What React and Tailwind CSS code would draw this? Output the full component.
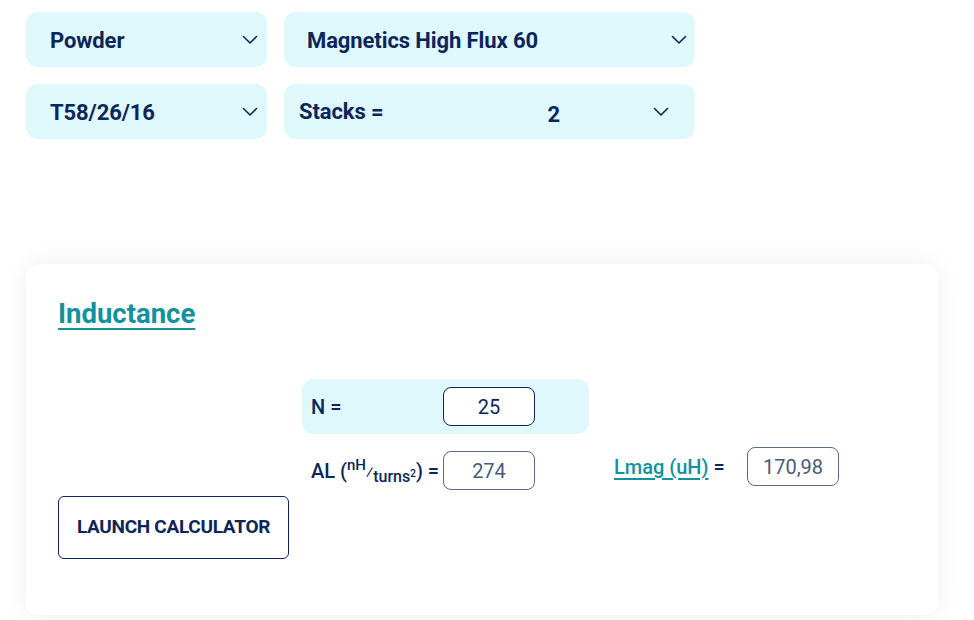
const Chevron = () => (
  <svg width="16" height="10" viewBox="0 0 16 10" fill="none" className="shrink-0">
    <polyline points="1.5,1.5 8,8 14.5,1.5" stroke="#0c2659" strokeWidth="1.6" strokeLinecap="round" strokeLinejoin="round" />
  </svg>
);

const Select = ({ className, children }) => (
  <div className={`h-[55px] rounded-xl bg-[#dff8fc] flex items-center ${className}`}>
    {children}
  </div>
);

const ValueBox = ({ value, strong }) => (
  <div
    className={`w-[92px] h-[39px] rounded-lg border bg-white flex items-center justify-center text-[20px] ${
      strong ? "border-[#0c2659] text-[#0c2659]" : "border-[#5b6b8c] text-[#4b5a78]"
    }`}
  >
    {value}
  </div>
);

export default function App() {
  return (
    <div
      className="min-h-screen bg-white pl-[26px] pt-[12px] text-[#0c2659]"
      style={{ fontFamily: "Roboto, 'Noto Sans', sans-serif" }}
    >
      {/* DROPDOWNS */}
      <div className="grid grid-cols-[241px_411px] gap-[17px]">
        <Select className="pl-[24px] pr-[9px] justify-between">
          <span className="text-[22px] font-bold tracking-[-0.1px] mt-[2px]">Powder</span>
          <Chevron />
        </Select>
        <Select className="pl-[23px] pr-[8px] justify-between">
          <span className="text-[22px] font-bold tracking-[-0.1px] mt-[2px]">Magnetics High Flux 60</span>
          <Chevron />
        </Select>
        <Select className="pl-[24px] pr-[9px] justify-between">
          <span className="text-[22px] font-bold tracking-[-0.1px] mt-[2px]">T58/26/16</span>
          <Chevron />
        </Select>
        <Select className="pl-[15px] pr-[26px]">
          <span className="text-[22px] font-bold tracking-[-0.1px] -mt-[1px]">Stacks =</span>
          <span className="text-[22px] font-bold ml-[164px] mt-[5px]">2</span>
          <span className="ml-auto">
            <Chevron />
          </span>
        </Select>
      </div>

      {/* CARD */}
      <div className="mt-[125px] w-[912px] h-[351px] bg-white rounded-xl shadow-[0_0_24px_rgba(0,0,0,0.07)] pl-[32px] pt-[34px]">
        <h2 className="text-[27.5px] leading-[32px] font-bold text-[#12919e] underline underline-offset-[5px] decoration-[2px] w-fit">
          Inductance
        </h2>

        <div className="flex items-start mt-[49px]">
          <div className="w-[231px] mt-[117px]">
            <button className="w-[231px] h-[63px] rounded-md border border-[#0c2659] text-[19px] font-bold uppercase tracking-[-0.3px]">
              Launch Calculator
            </button>
          </div>

          <div className="w-[287px] ml-[13px]">
            <div className="h-[55px] rounded-xl bg-[#dff8fc] flex items-center pl-[9px]">
              <span className="w-[132px] text-[20px] font-medium">N =</span>
              <ValueBox value="25" strong />
            </div>
            <div className="flex items-center pl-[9px] mt-[17px]">
              <span className="w-[132px] text-[20px] font-medium whitespace-nowrap">
                AL (
                <sup className="text-[15px]">nH</sup>
                <span className="text-[16px]">⁄</span>
                <sub className="text-[16px]">
                  turns<sup className="text-[10px]">2</sup>
                </sub>
                ) =
              </span>
              <ValueBox value="274" />
            </div>
          </div>

          <div className="flex items-center ml-[25px] mt-[68px]">
            <span className="w-[133px] text-[20px] font-medium whitespace-nowrap">
              <span className="text-[#12919e] underline underline-offset-[4px]">Lmag (uH)</span> =
            </span>
            <ValueBox value="170,98" />
          </div>
        </div>
      </div>
    </div>
  );
}
